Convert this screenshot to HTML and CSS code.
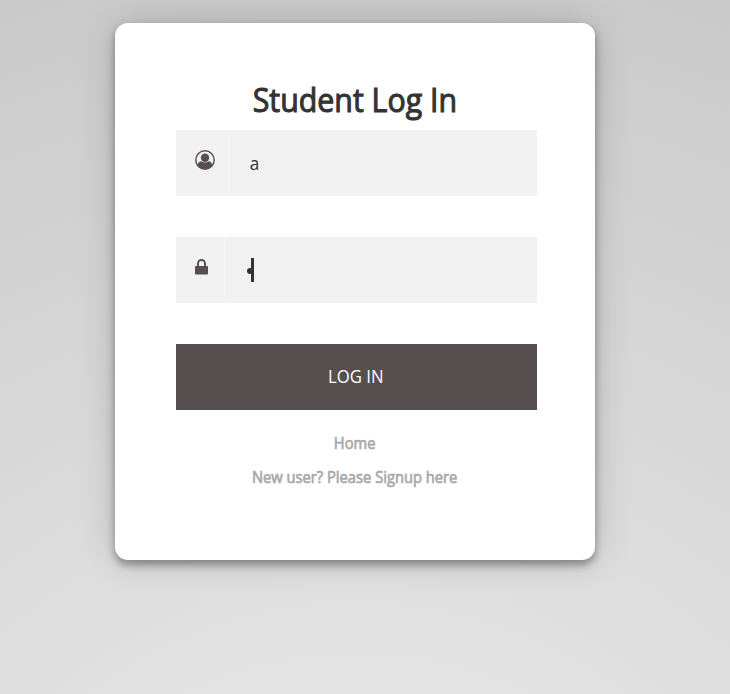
FILE: index.html
```html
<!DOCTYPE html>
<html lang="en">
<head>
<meta charset="utf-8">
<title>Student Log In</title>
<link rel="stylesheet" href="styles.css">
</head>
<body>
<main class="card">
  <h1 class="title"><span class="title-text">Student Log In</span></h1>
  <form class="form">
    <div class="field">
      <span class="addon addon-user">
        <svg class="icon-user" viewBox="0 0 20 20"><circle cx="10" cy="10" r="9.2" fill="none" stroke="#574f4f" stroke-width="1.4"/><circle cx="10" cy="7.7" r="4.2" fill="#574f4f"/><path fill="#574f4f" d="M2.8 15.6C3 12.5 4.6 11.4 6.3 11.3C8.5 13 11.5 13 13.7 11.3C15.4 11.4 17 12.5 17.2 15.6C13.6 20.2 6.4 20.2 2.8 15.6Z"/></svg>
      </span>
      <span class="value value-user">a</span>
    </div>
    <div class="field">
      <span class="addon addon-lock">
        <svg class="icon-lock" viewBox="0 0 13 16"><path fill="none" stroke="#574f4f" stroke-width="1.9" d="M3 8V4.5a3.5 3.5 0 0 1 7 0V8"/><rect y="7" width="13" height="8.6" rx=".8" fill="#574f4f"/></svg>
      </span>
      <span class="value value-password"><span class="bullet"></span><span class="caret"></span></span>
    </div>
    <button class="submit" type="button"><span class="submit-text">LOG IN</span></button>
  </form>
  <nav class="links">
    <a class="link"><span class="link-text">Home</span></a>
    <a class="link"><span class="link-text">New user? Please Signup here</span></a>
  </nav>
</main>
</body>
</html>
```

FILE: styles.css
```css
* { box-sizing: border-box; }
html { height: 100%; }
body {
  margin: 0;
  height: 694px;
  padding: 23px 0 0 115px;
  overflow: hidden;
  background: radial-gradient(circle 1100px at 49% 1040px, #e4e4e4 0%, #e4e4e4 31%, #cacaca 100%);
  font-family: "Open Sans", "Noto Sans", sans-serif;
}
.card {
  width: 480px;
  height: 537px;
  padding: 53px 58px 0 61px;
  border-radius: 13px;
  background: #fff;
  box-shadow: 0 5px 8px rgba(0, 0, 0, .36), 0 0 38px rgba(0, 0, 0, .18);
}
.title {
  display: flex;
  justify-content: center;
  height: 54px;
  margin: 0 3px 0 0;
  color: #333;
  font-size: 33.5px;
  font-weight: 400;
  line-height: 47px;
  white-space: nowrap;
}
.title-text { -webkit-text-stroke: 1.1px #333; transform: scaleX(.905); }
.form { display: grid; gap: 41px; }
.field { display: flex; height: 66px; background: #f1f1f1; }
.addon { display: flex; padding: 20px 0 0 19px; border-right: 1px solid #f6f6f6; }
.addon-user { width: 53px; }
.addon-lock { width: 49px; padding-top: 22px; }
.icon-user { width: 20px; height: 20px; }
.icon-lock { width: 13px; height: 16px; }
.value { display: flex; color: #333; font-size: 18px; font-weight: 400; line-height: 66px; }
.value-user { padding-left: 21px; transform: scaleX(.95); }
.value-password { padding: 21px 0 0 22px; }
.bullet { width: 6px; height: 6px; margin-top: 10px; border-radius: 50%; background: #333; }
.caret { width: 3px; height: 24px; margin-left: -2px; background: #333; }
.submit {
  height: 66px;
  padding: 0;
  border: 0;
  background: #574f4f;
  color: #fff;
  font: 400 18.5px/64px "Open Sans", "Noto Sans", sans-serif;
}
.submit-text { display: inline-block; transform: translate(-1px, -1px) scaleX(.905); }
.links { display: flex; flex-direction: column; align-items: center; margin: 16px 3px 0 0; }
.link { height: 34px; color: #a9a9a9; font-size: 16px; line-height: 34px; white-space: nowrap; -webkit-text-stroke: .7px #a9a9a9; }
.link-text { display: inline-block; transform: scaleX(.92); }
```
